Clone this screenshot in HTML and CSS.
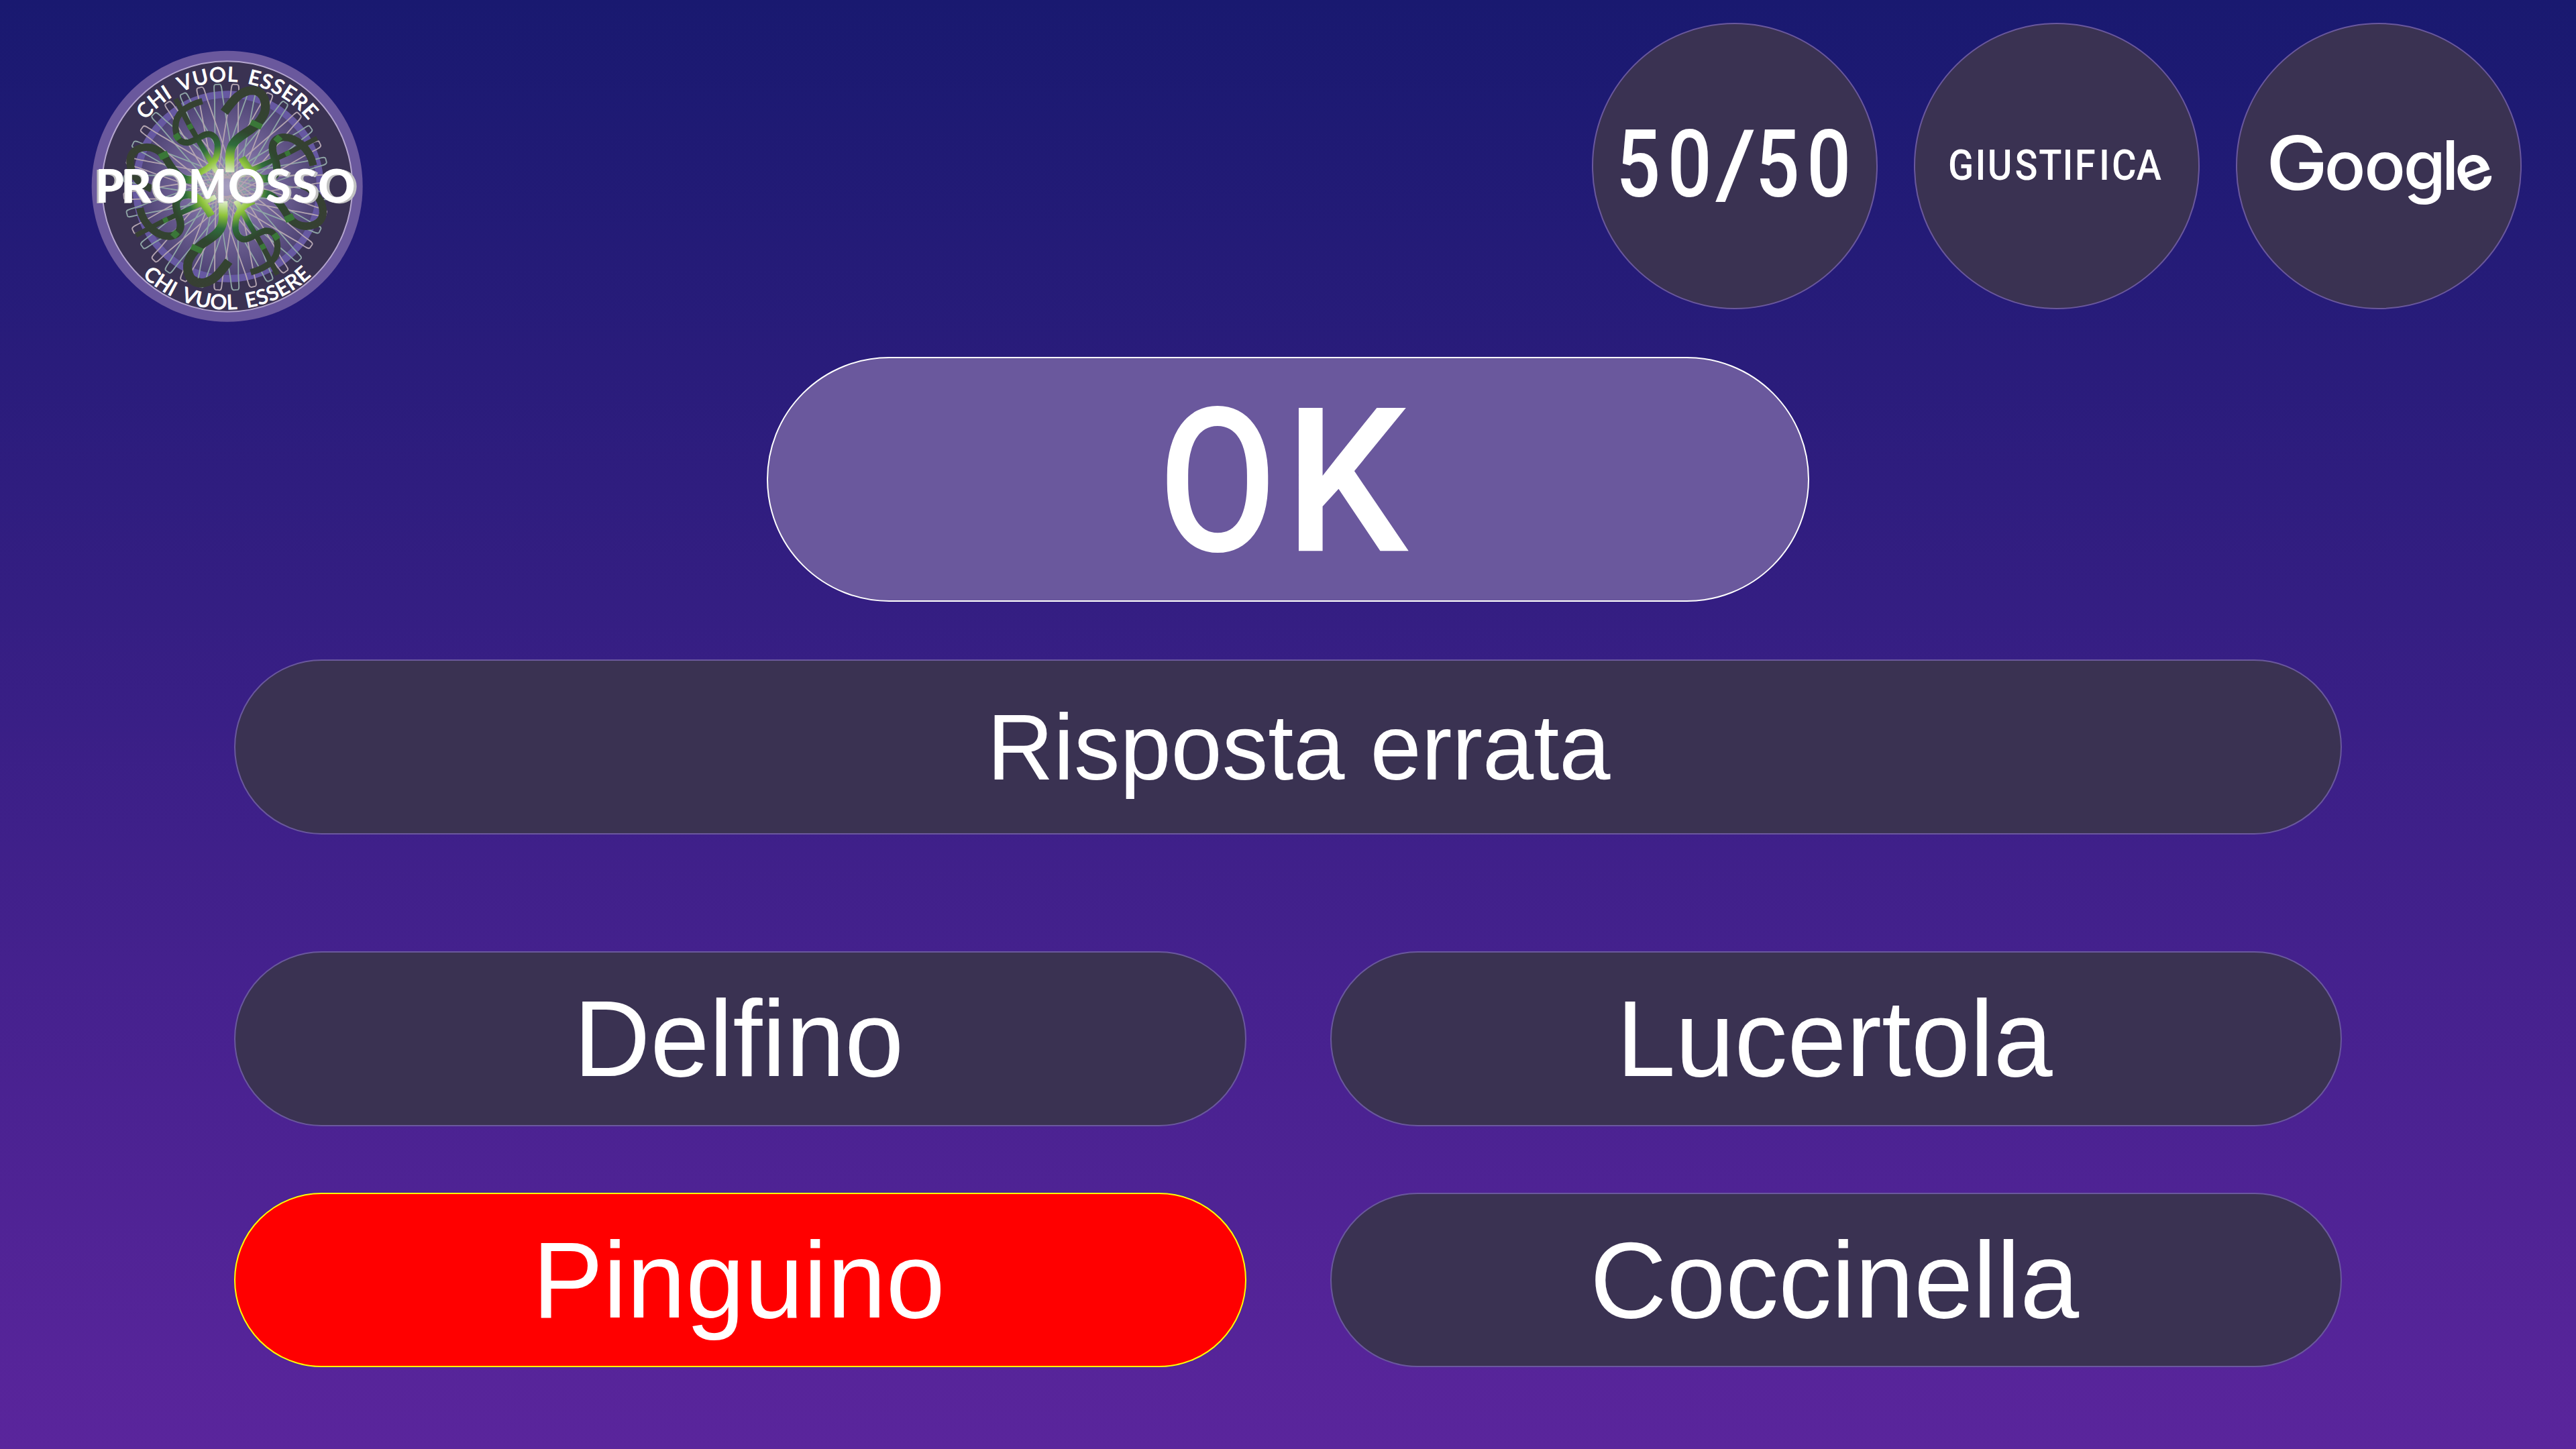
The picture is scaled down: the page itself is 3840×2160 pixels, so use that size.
FILE: index.html
```html
<!DOCTYPE html>
<html lang="it">
<head>
<meta charset="utf-8">
<title>Chi vuol essere promosso</title>
<link rel="stylesheet" href="styles.css">
</head>
<body>
<header class="topbar">
  <svg class="logo" viewBox="0 0 1320 1320" aria-label="Chi vuol essere promosso">
    <defs>
      <radialGradient id="glow" gradientUnits="userSpaceOnUse" cx="660" cy="654" r="400">
        <stop offset="0" stop-color="#a79fc0"/>
        <stop offset=".5" stop-color="#74669a"/>
        <stop offset="1" stop-color="#4f4474"/>
      </radialGradient>
      <radialGradient id="vine" gradientUnits="userSpaceOnUse" cx="655" cy="655" r="460">
        <stop offset=".14" stop-color="#e3efd0"/>
        <stop offset=".28" stop-color="#8fc43c"/>
        <stop offset=".41" stop-color="#2f6d3c"/>
        <stop offset=".56" stop-color="#30462f"/>
        <stop offset="1" stop-color="#373f33"/>
      </radialGradient>
      <path id="loop" d="M-10-461L8-461C22-460 14-430 20-380C30-250 42-120 42 0C42 120 30 250 20 380C14 430 22 460 10 461L-8 461C-22 460-14 430-20 380C-30 250-42 120-42 0C-42-120-30-250-20-380C-14-430-22-460-10-461Z"/>
      <g id="vines" fill="none" stroke="url(#vine)">
        <path stroke-width="40" d="M643 322C685 265 715 226 768 224C828 224 838 300 818 335C805 362 790 378 760 400C715 432 668 450 668 520L668 590"/>
        <path stroke-width="34" d="M318 664C250 640 218 580 222 535C228 485 280 474 315 480C355 490 375 515 395 550C430 605 460 628 505 625"/>
        <path stroke-width="28" d="M545 272C460 295 425 335 425 385C426 430 440 460 480 458C530 445 560 405 590 425C628 450 612 520 595 545C580 570 555 582 530 592"/>
        <path stroke-width="24" d="M425 262L490 385L612 592"/>
        <path stroke-width="34" d="M265 750C280 830 350 880 400 876C450 870 455 830 440 790C420 735 420 700 470 692C520 680 560 740 585 785"/>
        <path stroke-width="22" d="M248 872L380 804L605 700"/>
      </g>
      <g id="bands" fill="none" stroke="#3a7738">
        <path stroke-width="26" d="M762 366L810 388"/>
        <path stroke-width="42" d="M366 502L378 528"/>
        <path stroke-width="28" d="M424 420L440 444"/>
        <path stroke-width="24" d="M485 376L496 397"/>
        <path stroke-width="30" d="M412 858L434 878"/>
        <path stroke-width="22" d="M370 809L390 799"/>
      </g>
      <path id="arc-top" d="M186 655A469 469 0 0 1 1124 655"/>
      <path id="arc-bottom" d="M105 655A550 550 0 0 0 1205 655"/>
    </defs>
    <circle cx="656" cy="653" r="606" fill="#6a589d"/>
    <circle cx="656" cy="654" r="560" fill="#3a3252" stroke="#b5a6cf" stroke-width="6"/>
    <circle cx="660" cy="654" r="412" fill="url(#glow)" stroke="#6658a1" stroke-width="32"/>
    <g fill="none" stroke-width="5.5" transform="translate(653 657)">
      <g stroke="#8fa5a6">
        <use href="#loop" transform="rotate(-5)"/><use href="#loop" transform="rotate(15)"/><use href="#loop" transform="rotate(35)"/>
        <use href="#loop" transform="rotate(55)"/><use href="#loop" transform="rotate(75)"/><use href="#loop" transform="rotate(95)"/>
        <use href="#loop" transform="rotate(115)"/><use href="#loop" transform="rotate(135)"/><use href="#loop" transform="rotate(155)"/>
      </g>
      <g stroke="#b3a4b0">
        <use href="#loop" transform="rotate(5)"/><use href="#loop" transform="rotate(25)"/><use href="#loop" transform="rotate(45)"/>
        <use href="#loop" transform="rotate(65)"/><use href="#loop" transform="rotate(85)"/><use href="#loop" transform="rotate(105)"/>
        <use href="#loop" transform="rotate(125)"/><use href="#loop" transform="rotate(145)"/><use href="#loop" transform="rotate(165)"/>
      </g>
    </g>
    <use href="#vines"/><use href="#vines" transform="rotate(180 653 655)"/>
    <use href="#bands"/><use href="#bands" transform="rotate(180 653 655)"/>
    <text class="logo-arc"><textPath href="#arc-top" startOffset="320" textLength="834">CHI VUOL ESSERE</textPath></text>
    <text class="logo-arc"><textPath href="#arc-bottom" startOffset="446" textLength="836">CHI VUOL ESSERE</textPath></text>
    <g class="logo-name">
      <text class="logo-shade" aria-hidden="true" y="729"><tspan x="58">P</tspan><tspan x="180">R</tspan><tspan x="312" textLength="162" lengthAdjust="spacingAndGlyphs">O</tspan><tspan x="482" textLength="168" lengthAdjust="spacingAndGlyphs">M</tspan><tspan x="664" textLength="164" lengthAdjust="spacingAndGlyphs">O</tspan><tspan x="836">S</tspan><tspan x="958">S</tspan><tspan x="1075">O</tspan></text>
      <text y="727"><tspan x="66">P</tspan><tspan x="184">R</tspan><tspan x="317" textLength="162" lengthAdjust="spacingAndGlyphs">O</tspan><tspan x="485" textLength="168" lengthAdjust="spacingAndGlyphs">M</tspan><tspan x="660" textLength="164" lengthAdjust="spacingAndGlyphs">O</tspan><tspan x="828">S</tspan><tspan x="946">S</tspan><tspan x="1062">O</tspan></text>
    </g>
  </svg>
  <nav class="helps">
    <button class="help"><svg viewBox="75 49 1266 1266"><text class="din half" transform="scale(.83 1)" y="820"><tspan x="214 490">50</tspan><tspan x="748" textLength="218" lengthAdjust="spacingAndGlyphs">/</tspan><tspan x="963 1239">50</tspan></text></svg></button>
    <button class="help"><svg viewBox="75 49 1266 1266"><text class="din justify" transform="scale(.88 1)" y="744" x="252 390 452 591 713 833 895 1018 1083 1208">GIUSTIFICA</text></svg></button>
    <button class="help"><svg viewBox="3335 36 422 422"><text class="google"><tspan class="cap" x="3378" y="283" textLength="92" lengthAdjust="spacingAndGlyphs">G</tspan><tspan x="3464.5 3524 3582.5 3639.5" y="283">oogl</tspan><tspan class="tilt" x="3670" y="291" rotate="-20">e</tspan></text></svg></button>
  </nav>
</header>
<main class="game">
  <button class="confirm"><svg viewBox="1145.5 533.5 1549 361"><text class="din ok" transform="scale(.85 1)" y="820.7"><tspan x="2032">O</tspan><tspan x="2253" textLength="216" lengthAdjust="spacingAndGlyphs">K</tspan></text></svg></button>
  <div class="pill question"><span class="label">Risposta errata</span></div>
  <div class="answers">
    <button class="pill"><span class="label">Delfino</span></button>
    <button class="pill"><span class="label">Lucertola</span></button>
    <button class="pill wrong"><span class="label">Pinguino</span></button>
    <button class="pill"><span class="label">Coccinella</span></button>
  </div>
</main>
</body>
</html>
```
FILE: styles.css
```css
* { box-sizing: border-box; }
body {
  margin: 0;
  width: 3840px;
  height: 2160px;
  overflow: hidden;
  background: linear-gradient(#191970, #5a259c);
  font-family: "Liberation Sans", Arial, sans-serif;
  color: #fff;
}
button { margin: 0; padding: 0; color: inherit; font: inherit; }
svg { display: block; }
.topbar {
  display: flex;
  justify-content: space-between;
  align-items: flex-start;
  height: 531.7px;
  padding: 34px 81px 0 120px;
}
.logo { width: 440px; height: 440px; margin-top: 26px; }
.logo text { fill: #fff; font-family: Lato, sans-serif; }
.logo-arc { font-size: 94px; font-weight: 700; word-spacing: 20px; }
.logo-name { font-size: 206px; font-weight: 900; }
.logo .logo-shade { fill: #c2c2c2; }
.helps { display: flex; gap: 53.5px; }
.help {
  width: 426.5px;
  height: 426.5px;
  border: 2px solid #6a589d;
  border-radius: 50%;
  background: #3a3252;
}
.help svg, .confirm svg { width: 100%; height: 100%; }
.din { fill: #fff; font-family: Roboto, sans-serif; }
.half { font-size: 419px; font-weight: 500; }
.justify { font-size: 191px; font-weight: 500; }
.ok { font-size: 300px; font-weight: 500; }
.google { fill: #fff; font-family: Inter, sans-serif; font-size: 102px; font-weight: 500; }
.google .cap { font-size: 111px; }
.google .tilt { font-size: 94px; font-weight: 600; }
.game { display: flex; flex-direction: column; align-items: center; }
.confirm {
  width: 1554px;
  height: 365px;
  border: 2px solid #fff;
  border-radius: 183px;
  background: #6a589d;
}
.pill {
  display: flex;
  align-items: center;
  justify-content: center;
  height: 260.5px;
  padding: 0;
  border: 2px solid #6a589d;
  border-radius: 131px;
  background: #3a3252;
  font-size: 158px;
  line-height: 1;
}
.label { transform: scaleY(1.02); }
.question { width: 3142px; margin-top: 86.5px; font-size: 137px; padding-left: 32px; }
.answers {
  display: grid;
  grid-template-columns: 1fr 1fr;
  gap: 99px 125px;
  width: 3142px;
  margin-top: 174.5px;
}
.answers .pill { padding-right: 4px; }
.answers .wrong { border-color: #ff0; background: #f00; }
```
